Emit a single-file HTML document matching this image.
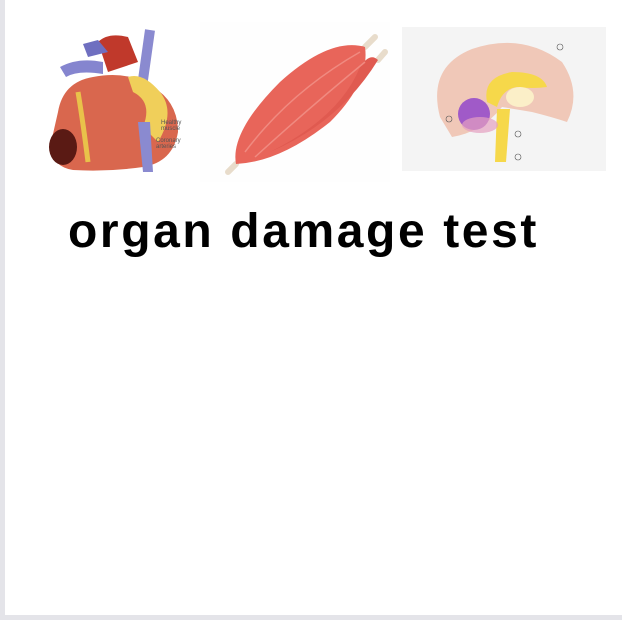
<!DOCTYPE html>
<html><head><style>
html,body{margin:0;padding:0;}
body{width:622px;height:620px;background:#e4e4e9;position:relative;overflow:hidden;font-family:"Liberation Sans",sans-serif;}
#page{position:absolute;left:5px;top:0;width:617px;height:615px;background:#fff;}
h1{position:absolute;left:68px;top:204px;margin:0;font-size:48px;font-weight:bold;color:#000;letter-spacing:2.6px;}
svg{position:absolute;}
</style></head><body>
<div id="page"></div>
<!-- heart -->
<svg style="left:48px;top:22px" width="152" height="150" viewBox="0 0 152 150">
<rect width="152" height="150" fill="#fff"/>
<path d="M50 20 Q60 10 80 15 L90 40 L60 50 Z" fill="#c0392b"/>
<rect x="97" y="8" width="10" height="100" fill="#8a8ad0" transform="rotate(8 102 8)"/>
<path d="M12 45 Q30 35 55 40 L55 52 Q30 48 18 55 Z" fill="#8585cf"/>
<path d="M35 22 L50 18 L60 30 L40 35Z" fill="#6f6fc0"/>
<path d="M10 90 Q15 60 45 55 Q80 48 105 65 Q130 80 130 110 Q125 140 95 145 Q60 150 25 148 Q5 145 2 125 Z" fill="#d9674e"/>
<path d="M80 55 Q95 50 112 70 Q128 90 110 120 L95 105 Q105 80 85 70Z" fill="#f0cf5a"/>
<path d="M30 70 Q35 100 40 140" stroke="#e9c24a" stroke-width="5" fill="none"/>
<ellipse cx="15" cy="125" rx="14" ry="18" fill="#5a1a14"/>
<path d="M90 100 L95 150 L105 150 L102 100Z" fill="#8a8ad0"/>
<text x="113" y="102" font-size="6" fill="#555">Healthy</text><text x="113" y="108" font-size="6" fill="#555">muscle</text>
<text x="108" y="120" font-size="6" fill="#555">Coronary</text><text x="108" y="126" font-size="6" fill="#555">arteries</text>
</svg>
<!-- muscle -->
<svg style="left:200px;top:22px" width="190" height="160" viewBox="0 0 190 160">
<rect width="190" height="160" fill="#fefefe"/>
<path d="M28 150 L36 142 M175 15 L165 25 M185 30 L178 38" stroke="#e8dccb" stroke-width="6" stroke-linecap="round"/>
<path d="M36 142 Q30 110 80 60 Q130 15 165 25 Q170 60 130 100 Q80 140 36 142Z" fill="#e8655a"/>
<path d="M70 130 Q140 100 178 38 Q170 30 160 45 Q140 95 70 130Z" fill="#e05a50"/>
<path d="M45 130 Q90 70 160 30 M55 135 Q110 85 165 40" stroke="#f08a80" stroke-width="1.5" fill="none"/>
</svg>
<!-- brain -->
<svg style="left:402px;top:27px" width="204" height="144" viewBox="0 0 204 144">
<rect width="204" height="144" fill="#f4f4f4"/>
<path d="M38 90 Q25 40 70 22 Q120 5 160 35 Q180 65 165 95 Q150 90 130 85 L100 80 Q80 105 50 110Z" fill="#f0c8b8"/>
<path d="M85 75 Q80 50 110 45 Q140 45 145 60 Q130 62 115 60 Q100 62 95 80Z" fill="#f6d84a"/>
<ellipse cx="118" cy="70" rx="14" ry="10" fill="#fbefc8"/>
<path d="M95 82 L108 82 L104 135 L93 135Z" fill="#f6d84a"/>
<circle cx="72" cy="87" r="16" fill="#a05ac8"/>
<ellipse cx="78" cy="98" rx="18" ry="8" fill="#e4a0c0" opacity="0.7"/>
<g fill="none" stroke="#555" stroke-width="0.6"><circle cx="158" cy="20" r="3"/><circle cx="116" cy="107" r="3"/><circle cx="116" cy="130" r="3"/><circle cx="47" cy="92" r="3"/></g>
</svg>
<h1>organ damage test</h1>
</body></html>
